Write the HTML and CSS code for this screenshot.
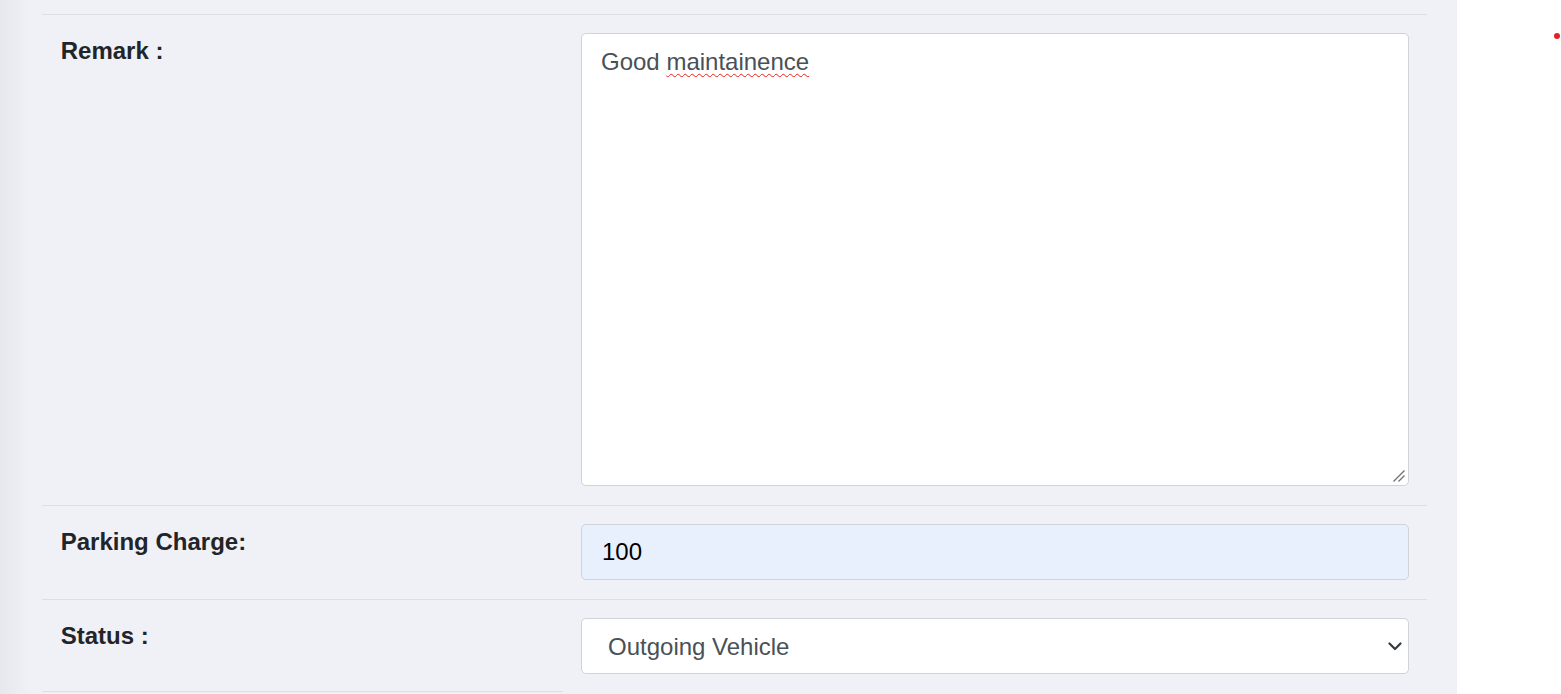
FILE: index.html
```html
<!DOCTYPE html>
<html lang="en">
<head>
<meta charset="utf-8">
<title>Vehicle Details</title>
<link rel="stylesheet" href="styles.css">
</head>
<body>
<div class="page">
  <main class="main">
    <div class="form-grid">
      <div class="cell label-cell"><span class="label">Remark :</span></div>
      <div class="cell field-cell">
        <div class="textarea" role="textbox" aria-multiline="true">Good <span class="misspelled">maintainence</span>
          <svg class="grip" width="14" height="14" viewBox="0 0 14 14" aria-hidden="true">
            <line x1="1.5" y1="12.5" x2="12.5" y2="1.5" stroke="#707070" stroke-width="1.3"/>
            <line x1="6.5" y1="12.5" x2="12.5" y2="6.5" stroke="#707070" stroke-width="1.3"/>
          </svg>
        </div>
      </div>

      <div class="cell label-cell"><span class="label">Parking Charge:</span></div>
      <div class="cell field-cell">
        <div class="input autofill">100</div>
      </div>

      <div class="cell label-cell last"><span class="label">Status :</span></div>
      <div class="cell field-cell no-bottom">
        <div class="select-wrap">
          <div class="select">Outgoing Vehicle</div>
          <svg class="chevron" width="14" height="9" viewBox="0 0 14 9" aria-hidden="true">
            <polyline points="1.5,1.5 7,7 12.5,1.5" fill="none" stroke="#343a40" stroke-width="2.2" stroke-linecap="round" stroke-linejoin="round"/>
          </svg>
        </div>
      </div>
    </div>
  </main>
  <aside class="side">
    <span class="dot"></span>
  </aside>
</div>
</body>
</html>
```

FILE: styles.css
```css
html, body {
  margin: 0;
  padding: 0;
  height: 100%;
  overflow: hidden;
}

body {
  font-family: "Liberation Sans", Arial, sans-serif;
  background: #ffffff;
}

.page {
  display: flex;
  height: 694px;
}

.main {
  width: 1457px;
  flex: none;
  background: linear-gradient(to right, #e7e8ed 0, #ecedf2 18px, #f0f1f6 30px, #f0f1f6 100%);
  padding: 14px 30px 0 42px;
  box-sizing: border-box;
}

.form-grid {
  display: grid;
  grid-template-columns: 521px 864px;
}

.cell {
  border-top: 1px solid #dcdfe4;
}

.label-cell {
  padding: 18px 18.75px;
}

.label-cell.last {
  border-bottom: 1px solid #dcdfe4;
}

.label {
  font-size: 24px;
  line-height: 36px;
  font-weight: 700;
  color: #212529;
  display: block;
}

.field-cell {
  padding: 18px 18px 18.75px 18px;
}

.textarea,
.input,
.select {
  box-sizing: border-box;
  width: 828px;
  border: 1px solid #ced4da;
  border-radius: 5px;
  font-size: 24px;
  line-height: 36px;
  color: #495057;
  background: #ffffff;
}

.textarea {
  position: relative;
  height: 453px;
  padding: 9.5px 19px;
}

.misspelled {
  text-decoration: underline wavy #e8211f;
  text-decoration-thickness: 1.2px;
  text-underline-offset: 3px;
}

.grip {
  position: absolute;
  right: 2px;
  bottom: 2px;
}

.input {
  height: 56px;
  padding: 9px 20px;
}

.autofill {
  background: #e8f0fe;
  color: #000000;
}

.select-wrap {
  position: relative;
  width: 828px;
}

.select {
  height: 56px;
  padding: 10px 26px;
}

.chevron {
  position: absolute;
  right: 7px;
  top: 24px;
}

.side {
  flex: 1;
  background: #ffffff;
  padding: 33px 0 0 97px;
}

.dot {
  display: block;
  width: 6px;
  height: 6px;
  border-radius: 50%;
  background: #e52222;
}
```
